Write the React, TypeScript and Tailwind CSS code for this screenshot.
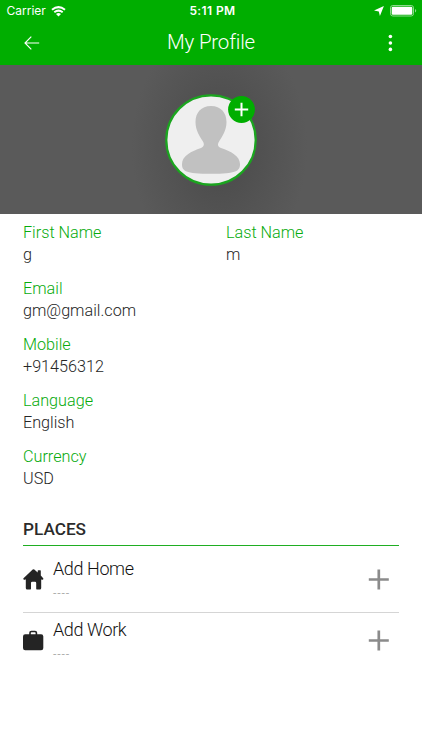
import React from "react";

function Field({ label, value }: { label: string; value: string }) {
  return (
    <div className="h-14 flex-1">
      <div className="h-[22px] text-[16.2px] leading-[22px] text-[#08ab0e]">{label}</div>
      <div className="h-[22px] text-[16.2px] leading-[22px] text-[#262626]">{value}</div>
    </div>
  );
}

function HomeIcon() {
  return (
    <svg width="21" height="21" viewBox="0 0 21 21" fill="#242424">
      <path d="M9.7.5Q10.5-.1 11.3.5L14.7 3.6V1.8Q14.7 1.2 15.3 1.2H17.2Q17.8 1.2 17.8 1.8V6.4L20.2 9.2Q20.6 9.8 20 10.5Q19.5 11 18.7 10.7L18.2 10.3V19Q18.2 20.5 16.8 20.5H13.8Q13.2 20.5 13.2 19.8V14Q13.2 12.8 12 12.8H9.2Q8 12.8 8 14V19.8Q8 20.5 7.3 20.5H4.2Q2.8 20.5 2.8 19V10.3L2 10.7Q1.2 11 .6 10.5Q0 9.8.5 9.2Z" />
    </svg>
  );
}

function WorkIcon() {
  return (
    <svg width="21" height="21" viewBox="0 0 21 21" fill="#242424">
      <rect x="0" y="4.3" width="20.3" height="15.9" rx="2.2" />
      <path d="M7 5V2.7Q7 1.5 8.4 1.5H12Q13.4 1.5 13.4 2.7V5" fill="none" stroke="#242424" strokeWidth="1.6" />
    </svg>
  );
}

function Place({ icon, name }: { icon: React.ReactNode; name: string }) {
  return (
    <div className="flex h-[61px]">
      <div className="w-[30px] pt-[23px]">{icon}</div>
      <div className="flex-1">
        <div className="mt-[12px] text-[18px] leading-[22px] font-light tracking-[-0.4px] text-[#111111]">{name}</div>
        <div className="mt-[7px] text-[12px] leading-[14px] font-light tracking-[0.8px] text-[#8f8f8f]">----</div>
      </div>
      <svg className="mt-[23px] mr-[10px]" width="21" height="21" viewBox="0 0 21 21" stroke="#8b8b8b" strokeWidth="2.7">
        <path d="M10.8.5V20.5M.8 10.5H20.8" />
      </svg>
    </div>
  );
}

export default function App() {
  return (
    <div className="h-[750px] w-[422px] overflow-hidden bg-white font-light [font-family:Roboto,sans-serif]">
      <header className="h-[65px] bg-[#00ae00] text-white">
        <div className="grid h-[22px] grid-cols-3 items-center [font-family:Inter,sans-serif]">
          <div className="flex items-center gap-[5px] pl-[6.5px]">
            <span className="text-[12px] font-normal">Carrier</span>
            <svg width="15" height="11" viewBox="0 0 15 11" fill="none" stroke="white" strokeWidth="2">
              <path d="M1 3.7Q7.5-1.5 14 3.7M3.3 6.3Q7.5 3 11.7 6.3" />
              <path d="M5 8Q7.5 6.2 10 8L7.5 10.6Z" fill="white" stroke="none" />
            </svg>
          </div>
          <div className="pl-[3px] text-center text-[12px] font-semibold tracking-[0.4px]">5:11 PM</div>
          <div className="flex items-center justify-end gap-[6px] pr-[5px]">
            <svg width="10" height="10" viewBox="0 0 10 10" fill="white"><path d="M9.9 0L5.9 9.9L4.8 5.5L0 4.6Z" /></svg>
            <svg width="27" height="12" viewBox="0 0 27 12">
              <rect x=".5" y=".5" width="23" height="10.5" rx="2.3" fill="none" stroke="#8cda8c" />
              <rect x="1.7" y="1.7" width="20.6" height="8.1" rx="1.2" fill="white" />
              <path d="M25 4V7.5Q26.2 7 26.2 5.8Q26.2 4.5 25 4Z" fill="#8cda8c" />
            </svg>
          </div>
        </div>
        <div className="flex h-[41px] items-center justify-between pr-[26px] pl-[24px]">
          <svg width="17" height="14" viewBox="0 0 17 14" fill="none" stroke="white" strokeWidth="1.15">
            <path d="M15.2 7H1M7.3.7L1 7L7.3 13.3" />
          </svg>
          <h1 className="pr-[3px] text-[20.5px] font-light tracking-[-0.2px]">My Profile</h1>
          <svg width="12" height="18" viewBox="0 0 12 18" fill="white">
            <circle cx="6.4" cy="2.5" r="1.8" /><circle cx="6.4" cy="9" r="1.8" /><circle cx="6.4" cy="15.4" r="1.8" />
          </svg>
        </div>
      </header>
      <section className="flex h-[149px] justify-center bg-[#5a5a5a] bg-[radial-gradient(ellipse_88px_125px_at_52%_55%,#4d4d4d_25%,#535353_58%,#5a5a5a_100%)] pt-[29px]">
        <div className="relative h-[92px] w-[92px]">
          <svg width="92" height="92" viewBox="0 0 92 92">
            <circle cx="46" cy="46" r="44.7" fill="#efefef" stroke="#1ba51f" strokeWidth="2.2" />
            <path d="M46 12C36 12 30.5 18.8 30.5 28C30.5 36 34.5 42 37.8 47.3C40 51 38.5 53 36 54C26.5 57.2 17 62 17 70C17 77 20 79.8 46 79.8C71.5 79.8 75 77 75 70C75 62 65.5 57.2 56 54C53 53 52 51 54.2 47.3C57.5 42 61.5 36 61.5 28C61.5 18.8 56 12 46 12Z" fill="#c1c1c1" />
          </svg>
          <svg className="absolute top-[1.5px] right-[1.7px]" width="27" height="27" viewBox="0 0 27 27">
            <circle cx="13.5" cy="13.5" r="13.4" fill="#00ae00" />
            <path d="M13.5 6.8V20.2M6.8 13.5H20.2" stroke="white" strokeWidth="2" />
          </svg>
        </div>
      </section>
      <main className="px-[23px] pt-[8px]">
        <div className="flex gap-[30px]">
          <Field label="First Name" value="g" />
          <Field label="Last Name" value="m" />
        </div>
        <Field label="Email" value="gm@gmail.com" />
        <Field label="Mobile" value="+91456312" />
        <Field label="Language" value="English" />
        <Field label="Currency" value="USD" />
        <h2 className="mt-[15px] h-[28px] text-[17.2px] leading-[24px] font-medium text-[#2b2b2b]">PLACES</h2>
        <div className="h-px bg-[#1fae22]" />
        <div className="h-[67px] border-b border-[#d5d5d5]"><Place icon={<HomeIcon />} name="Add Home" /></div>
        <div className="-mt-[6px]"><Place icon={<WorkIcon />} name="Add Work" /></div>
      </main>
    </div>
  );
}
